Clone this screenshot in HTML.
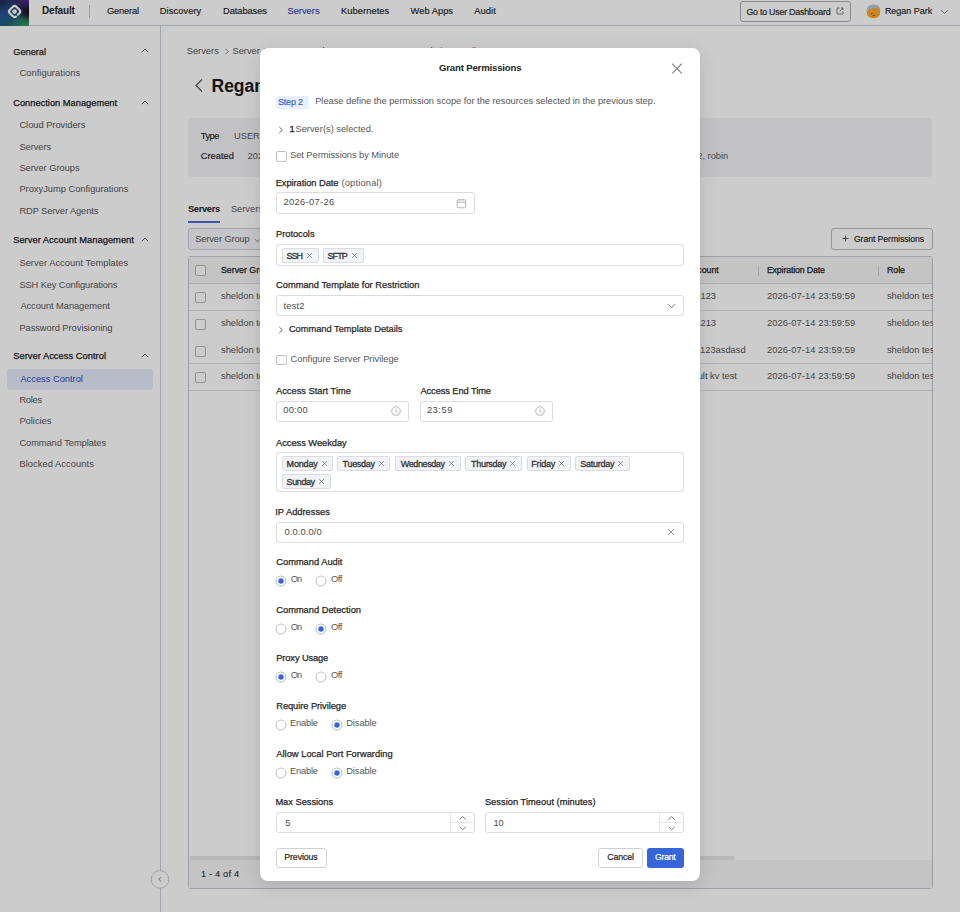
<!DOCTYPE html><html><head><meta charset="utf-8"><style>

html,body{margin:0;padding:0;width:960px;height:912px;overflow:hidden;background:#fff;font-family:"Liberation Sans",sans-serif;}
.layer{position:absolute;left:0;top:0;width:960px;height:912px;}
.t{position:absolute;white-space:pre;line-height:1;}
.b{position:absolute;box-sizing:border-box;}
svg.i{position:absolute;overflow:visible;}

</style></head><body>
<div class="layer"><div class="b" style="left:0px;top:0px;width:960px;height:912px;background:#fff;"></div><div class="b" style="left:0px;top:25px;width:960px;height:1px;background:#c9ced6;"></div><svg class="i" style="left:0;top:0" width="29" height="26" viewBox="0 0 29 26"><defs><linearGradient id="lg1" x1="0" y1="0.2" x2="1" y2="0.9"><stop offset="0" stop-color="#2356a8"/><stop offset="0.5" stop-color="#22607a"/><stop offset="1" stop-color="#33995a"/></linearGradient><radialGradient id="lg2" cx="1" cy="0" r="0.75"><stop offset="0" stop-color="#5a2aa8"/><stop offset="0.55" stop-color="#3a2060" stop-opacity="0.8"/><stop offset="1" stop-color="#3a2060" stop-opacity="0"/></radialGradient><radialGradient id="lg3" cx="1" cy="0.45" r="0.45"><stop offset="0" stop-color="#111318"/><stop offset="1" stop-color="#111318" stop-opacity="0"/></radialGradient><radialGradient id="lg4" cx="0" cy="0" r="0.6"><stop offset="0" stop-color="#1e2440"/><stop offset="1" stop-color="#1e2440" stop-opacity="0"/></radialGradient></defs><rect width="29" height="26" fill="url(#lg1)"/><rect width="29" height="26" fill="url(#lg4)"/><rect width="29" height="26" fill="url(#lg2)"/><rect width="29" height="26" fill="url(#lg3)"/><rect x="-4.6" y="-4.6" width="9.2" height="9.2" rx="2.4" transform="translate(14.6 11.5) rotate(45)" fill="none" stroke="#fff" stroke-width="2.1" stroke-dasharray="9.9 2.7 30 0" stroke-linecap="round"/><circle cx="14.6" cy="11.5" r="2.3" fill="#fff"/></svg><div class="b" style="left:89px;top:5px;width:1px;height:13px;background:#c8c8c8;"></div><div class="b" style="left:740px;top:1px;width:111px;height:21px;border:1px solid #a9acb2;border-radius:3px;"></div><svg class="i" style="left:836px;top:7px;" width="8" height="8" viewBox="0 0 8 8"><path d="M3.5 1H1V7H7V4.5 M5 1H7V3 M7 1L3.8 4.2" fill="none" stroke="#777" stroke-width="0.9"/></svg><svg class="i" style="left:866px;top:4px;" width="15" height="15" viewBox="0 0 15 15"><defs><clipPath id="av"><rect x="0.8" y="0.8" width="13.4" height="13.4" rx="5.6"/></clipPath></defs><g clip-path="url(#av)"><rect width="15" height="15" fill="#ffa82a"/><path d="M0 0H15V5.5Q11 3.2 7.5 4.2Q3 5.2 0 8Z" fill="#b8c8d8"/><circle cx="5.8" cy="9.6" r="0.7" fill="#6a4410"/><path d="M6.5 11.6 Q8 12.3 9.3 11.2" stroke="#6a4410" stroke-width="0.7" fill="none"/></g></svg><svg class="i" style="left:940px;top:9px;" width="9" height="6" viewBox="0 0 9 6"><path d="M1 1.2L4.4 4.6L7.8 1.2" fill="none" stroke="#666" stroke-width="0.9"/></svg><div class="b" style="left:160px;top:26px;width:1px;height:886px;background:#c9ced6;"></div><svg class="i" style="left:140.5px;top:48.0px;" width="8" height="5" viewBox="0 0 8 5"><path d="M0.8 4.2L4 1L7.2 4.2" fill="none" stroke="#555" stroke-width="0.9"/></svg><svg class="i" style="left:140.5px;top:99.5px;" width="8" height="5" viewBox="0 0 8 5"><path d="M0.8 4.2L4 1L7.2 4.2" fill="none" stroke="#555" stroke-width="0.9"/></svg><svg class="i" style="left:140.5px;top:236.5px;" width="8" height="5" viewBox="0 0 8 5"><path d="M0.8 4.2L4 1L7.2 4.2" fill="none" stroke="#555" stroke-width="0.9"/></svg><svg class="i" style="left:140.5px;top:352.5px;" width="8" height="5" viewBox="0 0 8 5"><path d="M0.8 4.2L4 1L7.2 4.2" fill="none" stroke="#555" stroke-width="0.9"/></svg><div class="b" style="left:7px;top:369px;width:146px;height:21px;background:#e5ecfa;border-radius:3px;"></div><svg class="i" style="left:150px;top:869px;" width="20" height="20" viewBox="0 0 20 20"><circle cx="10" cy="10.4" r="8.8" fill="#fff" stroke="#c9ced6" stroke-width="1"/><path d="M11 8.2L8.9 10.3L11 12.4" fill="none" stroke="#666" stroke-width="0.9"/></svg><svg class="i" style="left:223.5px;top:48px;" width="6" height="7" viewBox="0 0 6 7"><path d="M1.5 1L4.5 3.5L1.5 6" fill="none" stroke="#888" stroke-width="0.9"/></svg><svg class="i" style="left:194px;top:78px;" width="10" height="15" viewBox="0 0 10 15"><path d="M8 1.5L2 7.5L8 13.5" fill="none" stroke="#555" stroke-width="1.2"/></svg><div class="b" style="left:188px;top:118px;width:744px;height:59px;background:#f3f3f5;border-radius:4px;"></div><div class="b" style="left:188px;top:221px;width:32px;height:2px;background:#4a6cd4;"></div><div class="b" style="left:188px;top:228px;width:112px;height:22px;border:1px solid #c9ced6;border-radius:3px;background:#f7f7f9;"></div><svg class="i" style="left:254px;top:238px;" width="7" height="5" viewBox="0 0 7 5"><path d="M0.8 1L3.5 3.7L6.2 1" fill="none" stroke="#777" stroke-width="0.9"/></svg><div class="b" style="left:831px;top:228px;width:102px;height:22px;border:1px solid #b9bdc4;border-radius:3px;"></div><svg class="i" style="left:842px;top:235px;" width="7" height="7" viewBox="0 0 7 7"><path d="M3.5 0.5V6.5M0.5 3.5H6.5" stroke="#444" stroke-width="0.9"/></svg><div class="b" style="left:188px;top:256px;width:745px;height:633px;border:1px solid #c5c9d0;border-radius:3px;background:#fff;"></div><div class="b" style="left:189px;top:257px;width:743px;height:27px;background:#f5f5f7;border-bottom:1px solid #d4d8de;"></div><div class="b" style="left:189px;top:310px;width:743px;height:1px;background:#dcdfe4;"></div><div class="b" style="left:189px;top:363px;width:743px;height:1px;background:#dcdfe4;"></div><div class="b" style="left:189px;top:390px;width:743px;height:1px;background:#dcdfe4;"></div><div class="b" style="left:189px;top:860px;width:743px;height:28px;background:#f5f5f7;"></div><div class="b" style="left:190px;top:856px;width:545px;height:4px;background:#e6e6e6;border-radius:2px;"></div><div class="b" style="left:195px;top:265px;width:11px;height:11px;border:1px solid #b3b8c0;border-radius:2px;background:#fff;"></div><div class="b" style="left:195px;top:292px;width:11px;height:11px;border:1px solid #b3b8c0;border-radius:2px;background:#fff;"></div><div class="b" style="left:195px;top:319px;width:11px;height:11px;border:1px solid #b3b8c0;border-radius:2px;background:#fff;"></div><div class="b" style="left:195px;top:346px;width:11px;height:11px;border:1px solid #b3b8c0;border-radius:2px;background:#fff;"></div><div class="b" style="left:195px;top:372px;width:11px;height:11px;border:1px solid #b3b8c0;border-radius:2px;background:#fff;"></div><div class="b" style="left:758px;top:266px;width:1px;height:10px;background:#d0d3d8;"></div><div class="b" style="left:878px;top:266px;width:1px;height:10px;background:#d0d3d8;"></div><span class="t" style="left:42.00px;top:6.43px;font-size:10px;font-weight:700;letter-spacing:-0.167px;color:#1f1f1f;">Default</span><span class="t" style="left:107.00px;top:7.23px;font-size:9.3px;-webkit-text-stroke:0.15px currentColor;letter-spacing:-0.167px;color:#222;">General</span><span class="t" style="left:159.80px;top:7.23px;font-size:9.3px;-webkit-text-stroke:0.15px currentColor;letter-spacing:0.075px;color:#222;">Discovery</span><span class="t" style="left:223.10px;top:7.23px;font-size:9.3px;-webkit-text-stroke:0.15px currentColor;letter-spacing:-0.075px;color:#222;">Databases</span><span class="t" style="left:287.50px;top:7.23px;font-size:9.3px;-webkit-text-stroke:0.15px currentColor;color:#3048c0;">Servers</span><span class="t" style="left:340.90px;top:7.23px;font-size:9.3px;-webkit-text-stroke:0.15px currentColor;letter-spacing:0.089px;color:#222;">Kubernetes</span><span class="t" style="left:410.60px;top:7.23px;font-size:9.3px;-webkit-text-stroke:0.15px currentColor;letter-spacing:0.029px;color:#222;">Web Apps</span><span class="t" style="left:474.20px;top:7.23px;font-size:9.3px;-webkit-text-stroke:0.15px currentColor;letter-spacing:0.100px;color:#222;">Audit</span><span class="t" style="left:746.40px;top:7.96px;font-size:8.9px;-webkit-text-stroke:0.15px currentColor;letter-spacing:-0.242px;color:#222;">Go to User Dashboard</span><span class="t" style="left:884.90px;top:7.48px;font-size:9.0px;-webkit-text-stroke:0.15px currentColor;letter-spacing:-0.022px;color:#222;">Regan Park</span><span class="t" style="left:13.20px;top:47.53px;font-size:9.3px;-webkit-text-stroke:0.25px currentColor;letter-spacing:-0.033px;color:#1d1d1f;">General</span><span class="t" style="left:13.20px;top:99.03px;font-size:9.3px;-webkit-text-stroke:0.25px currentColor;color:#1d1d1f;">Connection Management</span><span class="t" style="left:13.20px;top:236.03px;font-size:9.3px;-webkit-text-stroke:0.25px currentColor;letter-spacing:0.033px;color:#1d1d1f;">Server Account Management</span><span class="t" style="left:13.20px;top:352.03px;font-size:9.3px;-webkit-text-stroke:0.25px currentColor;letter-spacing:0.040px;color:#1d1d1f;">Server Access Control</span><span class="t" style="left:19.40px;top:69.03px;font-size:9.3px;letter-spacing:0.062px;color:#555;">Configurations</span><span class="t" style="left:19.40px;top:121.03px;font-size:9.3px;letter-spacing:-0.014px;color:#555;">Cloud Providers</span><span class="t" style="left:19.40px;top:143.03px;font-size:9.3px;letter-spacing:-0.033px;color:#555;">Servers</span><span class="t" style="left:19.40px;top:164.03px;font-size:9.3px;letter-spacing:-0.017px;color:#555;">Server Groups</span><span class="t" style="left:19.40px;top:185.03px;font-size:9.3px;color:#555;">ProxyJump Configurations</span><span class="t" style="left:19.40px;top:207.03px;font-size:9.3px;letter-spacing:-0.088px;color:#555;">RDP Server Agents</span><span class="t" style="left:19.40px;top:259.03px;font-size:9.3px;letter-spacing:0.043px;color:#555;">Server Account Templates</span><span class="t" style="left:19.40px;top:280.53px;font-size:9.3px;letter-spacing:-0.105px;color:#555;">SSH Key Configurations</span><span class="t" style="left:20.40px;top:301.63px;font-size:9.3px;letter-spacing:-0.059px;color:#555;">Account Management</span><span class="t" style="left:19.40px;top:323.53px;font-size:9.3px;letter-spacing:-0.050px;color:#555;">Password Provisioning</span><span class="t" style="left:20.40px;top:375.03px;font-size:9.3px;color:#3048c0;">Access Control</span><span class="t" style="left:19.40px;top:396.03px;font-size:9.3px;letter-spacing:-0.250px;color:#555;">Roles</span><span class="t" style="left:19.40px;top:417.03px;font-size:9.3px;color:#555;">Policies</span><span class="t" style="left:19.40px;top:439.03px;font-size:9.3px;letter-spacing:-0.062px;color:#555;">Command Templates</span><span class="t" style="left:19.40px;top:460.03px;font-size:9.3px;letter-spacing:0.067px;color:#555;">Blocked Accounts</span><span class="t" style="left:186.75px;top:47.03px;font-size:9.3px;letter-spacing:-0.000px;color:#555;">Servers</span><span class="t" style="left:232.50px;top:47.03px;font-size:9.3px;color:#555;">Server Access Control</span><span class="t" style="left:370.00px;top:47.03px;font-size:9.3px;color:#555;">Access Control List Details</span><span class="t" style="left:211.50px;top:77.98px;font-size:17.5px;font-weight:700;color:#1a1a1a;">Regan Park</span><span class="t" style="left:200.80px;top:132.33px;font-size:9.3px;-webkit-text-stroke:0.15px currentColor;letter-spacing:-0.533px;color:#222;">Type</span><span class="t" style="left:234.00px;top:132.33px;font-size:9.3px;color:#555;">USER</span><span class="t" style="left:200.80px;top:152.03px;font-size:9.3px;-webkit-text-stroke:0.15px currentColor;color:#222;">Created</span><span class="t" style="left:247.60px;top:152.03px;font-size:9.3px;color:#555;">2025-07-14 10:23:45</span><span class="t" style="left:664.70px;top:152.03px;font-size:9.3px;color:#555;">sheldon2, robin</span><span class="t" style="left:188.00px;top:205.03px;font-size:9.3px;font-weight:700;letter-spacing:-0.333px;color:#222;">Servers</span><span class="t" style="left:230.90px;top:205.03px;font-size:9.3px;color:#555;">Servers Accounts</span><span class="t" style="left:195.20px;top:234.63px;font-size:9.3px;letter-spacing:-0.109px;color:#555;">Server Group</span><span class="t" style="left:853.90px;top:235.03px;font-size:8.7px;-webkit-text-stroke:0.15px currentColor;letter-spacing:-0.075px;color:#222;">Grant Permissions</span><span class="t" style="left:221.00px;top:266.45px;font-size:8.8px;-webkit-text-stroke:0.25px currentColor;color:#222;">Server Group</span><span class="t" style="left:687.00px;top:266.45px;font-size:8.8px;-webkit-text-stroke:0.25px currentColor;color:#222;">Account</span><span class="t" style="left:766.90px;top:266.25px;font-size:8.8px;-webkit-text-stroke:0.25px currentColor;letter-spacing:-0.157px;color:#222;">Expiration Date</span><span class="t" style="left:886.90px;top:266.25px;font-size:8.8px;-webkit-text-stroke:0.25px currentColor;color:#222;">Role</span><span class="t" style="left:221.00px;top:292.03px;font-size:9.3px;color:#555;">sheldon test</span><span class="t" style="left:663.30px;top:292.03px;font-size:9.3px;color:#555;">sheldons123</span><span class="t" style="left:886.90px;top:292.03px;font-size:9.3px;color:#555;">sheldon test</span><span class="t" style="left:766.90px;top:292.03px;font-size:9.3px;letter-spacing:0.111px;color:#555;">2026-07-14 23:59:59</span><span class="t" style="left:221.00px;top:319.03px;font-size:9.3px;color:#555;">sheldon test</span><span class="t" style="left:663.30px;top:319.03px;font-size:9.3px;color:#555;">sheldons213</span><span class="t" style="left:886.90px;top:319.03px;font-size:9.3px;color:#555;">sheldon test</span><span class="t" style="left:766.90px;top:319.03px;font-size:9.3px;letter-spacing:0.111px;color:#555;">2026-07-14 23:59:59</span><span class="t" style="left:221.00px;top:346.03px;font-size:9.3px;color:#555;">sheldon test</span><span class="t" style="left:662.90px;top:346.03px;font-size:9.3px;color:#555;">sheldons123asdasd</span><span class="t" style="left:886.90px;top:346.03px;font-size:9.3px;color:#555;">sheldon test</span><span class="t" style="left:766.90px;top:346.03px;font-size:9.3px;letter-spacing:0.111px;color:#555;">2026-07-14 23:59:59</span><span class="t" style="left:221.00px;top:372.03px;font-size:9.3px;color:#555;">sheldon test</span><span class="t" style="left:679.60px;top:372.03px;font-size:9.3px;color:#555;">default kv test</span><span class="t" style="left:886.90px;top:372.03px;font-size:9.3px;color:#555;">sheldon test</span><span class="t" style="left:766.90px;top:372.03px;font-size:9.3px;letter-spacing:0.111px;color:#555;">2026-07-14 23:59:59</span><span class="t" style="left:201.00px;top:869.93px;font-size:9.3px;-webkit-text-stroke:0.12px currentColor;letter-spacing:0.156px;color:#333;">1 - 4 of 4</span></div>
<div class="layer"><div class="b" style="left:933px;top:257px;width:27px;height:632px;background:#fff;"></div></div>
<div class="layer"><div class="b" style="left:0;top:0;width:960px;height:912px;background:rgba(0,0,0,0.2);"></div></div>
<div class="layer"><div class="b" style="left:260px;top:48px;width:440px;height:833px;background:#fff;border-radius:8px;box-shadow:0 4px 18px rgba(0,0,0,0.12);"></div><svg class="i" style="left:670px;top:62px;" width="14" height="14" viewBox="0 0 14 14"><path d="M2.2 1.7L11.8 11.5M11.8 1.7L2.2 11.5" stroke="#6f7378" stroke-width="1.05"/></svg><div class="b" style="left:276px;top:96px;width:33px;height:13px;background:#e8f0fd;border-radius:2px;"></div><svg class="i" style="left:278px;top:126px;" width="6" height="8" viewBox="0 0 6 8"><path d="M1.3 1L4.4 3.9L1.3 6.8" fill="none" stroke="#555" stroke-width="0.9"/></svg><div class="b" style="left:276px;top:151px;width:11px;height:11px;border:1px solid #b9bdc5;border-radius:2px;"></div><div class="b" style="left:276px;top:192px;width:199px;height:22px;border:1px solid #d9dce1;border-radius:3px;"></div><svg class="i" style="left:456px;top:198px;" width="11" height="11" viewBox="0 0 11 11"><rect x="1.2" y="1.8" width="8.4" height="8" rx="1" fill="none" stroke="#aaa" stroke-width="0.9"/><path d="M1.2 4.2H9.6M3.5 0.8V2.5M7.3 0.8V2.5" stroke="#aaa" stroke-width="0.9"/></svg><div class="b" style="left:276px;top:244px;width:408px;height:22px;border:1px solid #d9dce1;border-radius:3px;"></div><div class="b" style="left:282px;top:248px;width:37px;height:15px;background:#f2f3f6;border:1px solid #d9dce2;border-radius:2px;"></div><svg class="i" style="left:305.5px;top:251.5px;" width="7" height="7" viewBox="0 0 7 7"><path d="M1 1L6 6M6 1L1 6" stroke="#8a8a8a" stroke-width="0.85"/></svg><div class="b" style="left:323px;top:248px;width:41px;height:15px;background:#f2f3f6;border:1px solid #d9dce2;border-radius:2px;"></div><svg class="i" style="left:350.5px;top:251.5px;" width="7" height="7" viewBox="0 0 7 7"><path d="M1 1L6 6M6 1L1 6" stroke="#8a8a8a" stroke-width="0.85"/></svg><div class="b" style="left:276px;top:295px;width:408px;height:21px;border:1px solid #d9dce1;border-radius:3px;"></div><svg class="i" style="left:667px;top:303px;" width="9" height="6" viewBox="0 0 9 6"><path d="M1 1.2L4.5 4.7L8 1.2" fill="none" stroke="#666" stroke-width="0.9"/></svg><svg class="i" style="left:278px;top:326px;" width="6" height="8" viewBox="0 0 6 8"><path d="M1.3 1L4.4 3.9L1.3 6.8" fill="none" stroke="#555" stroke-width="0.9"/></svg><div class="b" style="left:276px;top:355px;width:11px;height:10px;border:1px solid #b9bdc5;border-radius:2px;"></div><div class="b" style="left:276px;top:401px;width:133px;height:21px;border:1px solid #d9dce1;border-radius:3px;"></div><div class="b" style="left:420px;top:401px;width:133px;height:21px;border:1px solid #d9dce1;border-radius:3px;"></div><svg class="i" style="left:391.2px;top:406.3px;" width="10" height="10" viewBox="0 0 10 10"><circle cx="5" cy="5" r="4.3" fill="none" stroke="#b0b0b0" stroke-width="0.9"/><path d="M5 2.6V5.2L6.6 6.6" fill="none" stroke="#b0b0b0" stroke-width="0.9"/></svg><svg class="i" style="left:535px;top:406.3px;" width="10" height="10" viewBox="0 0 10 10"><circle cx="5" cy="5" r="4.3" fill="none" stroke="#b0b0b0" stroke-width="0.9"/><path d="M5 2.6V5.2L6.6 6.6" fill="none" stroke="#b0b0b0" stroke-width="0.9"/></svg><div class="b" style="left:276px;top:452px;width:408px;height:40px;border:1px solid #d9dce1;border-radius:3px;"></div><div class="b" style="left:282px;top:456px;width:51px;height:15px;background:#f2f3f6;border:1px solid #d9dce2;border-radius:2px;"></div><svg class="i" style="left:320.5px;top:459.75px;" width="7" height="7" viewBox="0 0 7 7"><path d="M1 1L6 6M6 1L1 6" stroke="#8a8a8a" stroke-width="0.85"/></svg><div class="b" style="left:337px;top:456px;width:53px;height:15px;background:#f2f3f6;border:1px solid #d9dce2;border-radius:2px;"></div><svg class="i" style="left:378.2px;top:459.75px;" width="7" height="7" viewBox="0 0 7 7"><path d="M1 1L6 6M6 1L1 6" stroke="#8a8a8a" stroke-width="0.85"/></svg><div class="b" style="left:395px;top:456px;width:66px;height:15px;background:#f2f3f6;border:1px solid #d9dce2;border-radius:2px;"></div><svg class="i" style="left:448.4px;top:459.75px;" width="7" height="7" viewBox="0 0 7 7"><path d="M1 1L6 6M6 1L1 6" stroke="#8a8a8a" stroke-width="0.85"/></svg><div class="b" style="left:465px;top:456px;width:57px;height:15px;background:#f2f3f6;border:1px solid #d9dce2;border-radius:2px;"></div><svg class="i" style="left:509.3px;top:459.75px;" width="7" height="7" viewBox="0 0 7 7"><path d="M1 1L6 6M6 1L1 6" stroke="#8a8a8a" stroke-width="0.85"/></svg><div class="b" style="left:527px;top:456px;width:44px;height:15px;background:#f2f3f6;border:1px solid #d9dce2;border-radius:2px;"></div><svg class="i" style="left:558.0px;top:459.75px;" width="7" height="7" viewBox="0 0 7 7"><path d="M1 1L6 6M6 1L1 6" stroke="#8a8a8a" stroke-width="0.85"/></svg><div class="b" style="left:575px;top:456px;width:55px;height:15px;background:#f2f3f6;border:1px solid #d9dce2;border-radius:2px;"></div><svg class="i" style="left:617.4px;top:459.75px;" width="7" height="7" viewBox="0 0 7 7"><path d="M1 1L6 6M6 1L1 6" stroke="#8a8a8a" stroke-width="0.85"/></svg><div class="b" style="left:282px;top:474px;width:49px;height:15px;background:#f2f3f6;border:1px solid #d9dce2;border-radius:2px;"></div><svg class="i" style="left:318.1px;top:477.75px;" width="7" height="7" viewBox="0 0 7 7"><path d="M1 1L6 6M6 1L1 6" stroke="#8a8a8a" stroke-width="0.85"/></svg><div class="b" style="left:276px;top:522px;width:408px;height:21px;border:1px solid #d9dce1;border-radius:3px;"></div><svg class="i" style="left:667px;top:528px;" width="8" height="8" viewBox="0 0 8 8"><path d="M1 1L7 7M7 1L1 7" stroke="#888" stroke-width="0.9"/></svg><svg class="i" style="left:275.35px;top:574.6999999999999px;" width="12" height="12" viewBox="0 0 12 12"><circle cx="6" cy="6" r="5" fill="#fff" stroke="#aeb4c0" stroke-width="0.9"/><circle cx="6" cy="6" r="2.7" fill="#3565d8"/></svg><svg class="i" style="left:315.20000000000005px;top:574.6999999999999px;" width="12" height="12" viewBox="0 0 12 12"><circle cx="6" cy="6" r="5" fill="#fff" stroke="#b5b9c1" stroke-width="0.9"/></svg><svg class="i" style="left:275.35px;top:622.6999999999999px;" width="12" height="12" viewBox="0 0 12 12"><circle cx="6" cy="6" r="5" fill="#fff" stroke="#b5b9c1" stroke-width="0.9"/></svg><svg class="i" style="left:315.20000000000005px;top:622.6999999999999px;" width="12" height="12" viewBox="0 0 12 12"><circle cx="6" cy="6" r="5" fill="#fff" stroke="#aeb4c0" stroke-width="0.9"/><circle cx="6" cy="6" r="2.7" fill="#3565d8"/></svg><svg class="i" style="left:275.35px;top:670.6999999999999px;" width="12" height="12" viewBox="0 0 12 12"><circle cx="6" cy="6" r="5" fill="#fff" stroke="#aeb4c0" stroke-width="0.9"/><circle cx="6" cy="6" r="2.7" fill="#3565d8"/></svg><svg class="i" style="left:315.20000000000005px;top:670.6999999999999px;" width="12" height="12" viewBox="0 0 12 12"><circle cx="6" cy="6" r="5" fill="#fff" stroke="#b5b9c1" stroke-width="0.9"/></svg><svg class="i" style="left:275.35px;top:718.6999999999999px;" width="12" height="12" viewBox="0 0 12 12"><circle cx="6" cy="6" r="5" fill="#fff" stroke="#b5b9c1" stroke-width="0.9"/></svg><svg class="i" style="left:331.1px;top:718.6999999999999px;" width="12" height="12" viewBox="0 0 12 12"><circle cx="6" cy="6" r="5" fill="#fff" stroke="#aeb4c0" stroke-width="0.9"/><circle cx="6" cy="6" r="2.7" fill="#3565d8"/></svg><svg class="i" style="left:275.35px;top:767.0px;" width="12" height="12" viewBox="0 0 12 12"><circle cx="6" cy="6" r="5" fill="#fff" stroke="#b5b9c1" stroke-width="0.9"/></svg><svg class="i" style="left:331.1px;top:767.0px;" width="12" height="12" viewBox="0 0 12 12"><circle cx="6" cy="6" r="5" fill="#fff" stroke="#aeb4c0" stroke-width="0.9"/><circle cx="6" cy="6" r="2.7" fill="#3565d8"/></svg><div class="b" style="left:276px;top:812px;width:199px;height:21px;border:1px solid #d9dce1;border-radius:3px;"></div><div class="b" style="left:450px;top:813px;width:1px;height:19px;background:#e3e5e8;"></div><div class="b" style="left:450px;top:822px;width:24px;height:1px;background:#e3e5e8;"></div><svg class="i" style="left:459.2px;top:815.7px;" width="8" height="5" viewBox="0 0 8 5"><path d="M0.6 3.6L3.7 0.6L6.8 3.6" fill="none" stroke="#666" stroke-width="0.9"/></svg><svg class="i" style="left:459.2px;top:826px;" width="8" height="5" viewBox="0 0 8 5"><path d="M0.6 0.8L3.7 3.8L6.8 0.8" fill="none" stroke="#666" stroke-width="0.9"/></svg><div class="b" style="left:485px;top:812px;width:199px;height:21px;border:1px solid #d9dce1;border-radius:3px;"></div><div class="b" style="left:659px;top:813px;width:1px;height:19px;background:#e3e5e8;"></div><div class="b" style="left:659px;top:822px;width:24px;height:1px;background:#e3e5e8;"></div><svg class="i" style="left:668.2px;top:815.7px;" width="8" height="5" viewBox="0 0 8 5"><path d="M0.6 3.6L3.7 0.6L6.8 3.6" fill="none" stroke="#666" stroke-width="0.9"/></svg><svg class="i" style="left:668.2px;top:826px;" width="8" height="5" viewBox="0 0 8 5"><path d="M0.6 0.8L3.7 3.8L6.8 0.8" fill="none" stroke="#666" stroke-width="0.9"/></svg><div class="b" style="left:276px;top:848px;width:51px;height:20px;border:1px solid #cdd0d5;border-radius:3px;"></div><div class="b" style="left:598px;top:848px;width:45px;height:20px;border:1px solid #cdd0d5;border-radius:3px;"></div><div class="b" style="left:647px;top:848px;width:37px;height:20px;background:#3565d8;border-radius:3px;"></div><span class="t" style="left:439.00px;top:63.17px;font-size:9.6px;font-weight:700;letter-spacing:-0.175px;color:#262626;">Grant Permissions</span><span class="t" style="left:278.00px;top:98.18px;font-size:9px;-webkit-text-stroke:0.15px currentColor;letter-spacing:-0.200px;color:#2f5fd8;">Step 2</span><span class="t" style="left:315.20px;top:97.13px;font-size:9.3px;letter-spacing:-0.022px;color:#555;">Please define the permission scope for the resources selected in the previous step.</span><span class="t" style="left:289.50px;top:125.23px;font-size:9.3px;-webkit-text-stroke:0.30px currentColor;color:#222;">1</span><span class="t" style="left:295.50px;top:125.23px;font-size:9.3px;color:#555;">Server(s) selected.</span><span class="t" style="left:290.00px;top:150.83px;font-size:9.3px;letter-spacing:-0.042px;color:#555;">Set Permissions by Minute</span><span class="t" style="left:275.70px;top:178.63px;font-size:9.3px;-webkit-text-stroke:0.25px currentColor;letter-spacing:-0.057px;color:#262626;">Expiration Date</span><span class="t" style="left:341.40px;top:178.63px;font-size:9.3px;letter-spacing:0.200px;color:#555;">(optional)</span><span class="t" style="left:283.40px;top:198.33px;font-size:9.3px;letter-spacing:0.356px;color:#4a4a4a;">2026-07-26</span><span class="t" style="left:276.00px;top:230.23px;font-size:9.3px;-webkit-text-stroke:0.25px currentColor;letter-spacing:-0.025px;color:#262626;">Protocols</span><span class="t" style="left:286.60px;top:251.78px;font-size:9px;-webkit-text-stroke:0.30px currentColor;letter-spacing:-1.000px;color:#333;">SSH</span><span class="t" style="left:327.50px;top:251.78px;font-size:9px;-webkit-text-stroke:0.30px currentColor;letter-spacing:-0.933px;color:#333;">SFTP</span><span class="t" style="left:276.00px;top:281.23px;font-size:9.3px;-webkit-text-stroke:0.25px currentColor;letter-spacing:0.013px;color:#262626;">Command Template for Restriction</span><span class="t" style="left:283.60px;top:302.03px;font-size:9.3px;letter-spacing:0.150px;color:#4a4a4a;">test2</span><span class="t" style="left:288.90px;top:325.03px;font-size:9.3px;-webkit-text-stroke:0.22px currentColor;letter-spacing:-0.017px;color:#1f1f1f;">Command Template Details</span><span class="t" style="left:290.60px;top:355.23px;font-size:9.3px;letter-spacing:-0.016px;color:#555;">Configure Server Privilege</span><span class="t" style="left:276.00px;top:386.63px;font-size:9.3px;-webkit-text-stroke:0.25px currentColor;color:#262626;">Access Start Time</span><span class="t" style="left:420.40px;top:386.63px;font-size:9.3px;-webkit-text-stroke:0.25px currentColor;letter-spacing:-0.086px;color:#262626;">Access End Time</span><span class="t" style="left:283.20px;top:406.23px;font-size:9.3px;letter-spacing:0.300px;color:#4a4a4a;">00:00</span><span class="t" style="left:426.90px;top:406.23px;font-size:9.3px;letter-spacing:0.550px;color:#4a4a4a;">23:59</span><span class="t" style="left:276.00px;top:438.63px;font-size:9.3px;-webkit-text-stroke:0.25px currentColor;letter-spacing:-0.031px;color:#262626;">Access Weekday</span><span class="t" style="left:286.60px;top:459.78px;font-size:9px;-webkit-text-stroke:0.30px currentColor;letter-spacing:-0.160px;color:#333;">Monday</span><span class="t" style="left:342.60px;top:459.78px;font-size:9px;-webkit-text-stroke:0.30px currentColor;letter-spacing:-0.300px;color:#333;">Tuesday</span><span class="t" style="left:400.80px;top:459.78px;font-size:9px;-webkit-text-stroke:0.30px currentColor;letter-spacing:-0.400px;color:#333;">Wednesday</span><span class="t" style="left:470.90px;top:459.78px;font-size:9px;-webkit-text-stroke:0.30px currentColor;letter-spacing:-0.257px;color:#333;">Thursday</span><span class="t" style="left:531.30px;top:459.78px;font-size:9px;-webkit-text-stroke:0.30px currentColor;letter-spacing:-0.200px;color:#333;">Friday</span><span class="t" style="left:580.20px;top:459.78px;font-size:9px;-webkit-text-stroke:0.30px currentColor;letter-spacing:-0.229px;color:#333;">Saturday</span><span class="t" style="left:286.60px;top:477.78px;font-size:9px;-webkit-text-stroke:0.30px currentColor;letter-spacing:-0.400px;color:#333;">Sunday</span><span class="t" style="left:275.25px;top:508.23px;font-size:9.3px;-webkit-text-stroke:0.25px currentColor;color:#262626;">IP Addresses</span><span class="t" style="left:284.40px;top:528.23px;font-size:9.3px;letter-spacing:0.125px;color:#4a4a4a;">0.0.0.0/0</span><span class="t" style="left:276.25px;top:558.23px;font-size:9.3px;-webkit-text-stroke:0.25px currentColor;color:#262626;">Command Audit</span><span class="t" style="left:290.70px;top:575.13px;font-size:9.3px;letter-spacing:-1.000px;color:#555;">On</span><span class="t" style="left:331.00px;top:575.13px;font-size:9.3px;letter-spacing:-0.400px;color:#555;">Off</span><span class="t" style="left:276.25px;top:605.83px;font-size:9.3px;-webkit-text-stroke:0.25px currentColor;color:#262626;">Command Detection</span><span class="t" style="left:290.70px;top:623.13px;font-size:9.3px;letter-spacing:-1.000px;color:#555;">On</span><span class="t" style="left:331.00px;top:623.13px;font-size:9.3px;letter-spacing:-0.400px;color:#555;">Off</span><span class="t" style="left:276.25px;top:654.03px;font-size:9.3px;-webkit-text-stroke:0.25px currentColor;letter-spacing:-0.120px;color:#262626;">Proxy Usage</span><span class="t" style="left:290.70px;top:671.13px;font-size:9.3px;letter-spacing:-1.000px;color:#555;">On</span><span class="t" style="left:331.00px;top:671.13px;font-size:9.3px;letter-spacing:-0.400px;color:#555;">Off</span><span class="t" style="left:276.25px;top:702.03px;font-size:9.3px;-webkit-text-stroke:0.25px currentColor;letter-spacing:-0.062px;color:#262626;">Require Privilege</span><span class="t" style="left:290.00px;top:719.13px;font-size:9.3px;letter-spacing:-0.200px;color:#555;">Enable</span><span class="t" style="left:346.20px;top:719.13px;font-size:9.3px;letter-spacing:-0.067px;color:#555;">Disable</span><span class="t" style="left:276.25px;top:750.23px;font-size:9.3px;-webkit-text-stroke:0.25px currentColor;letter-spacing:0.023px;color:#262626;">Allow Local Port Forwarding</span><span class="t" style="left:290.00px;top:767.43px;font-size:9.3px;letter-spacing:-0.200px;color:#555;">Enable</span><span class="t" style="left:346.20px;top:767.43px;font-size:9.3px;letter-spacing:-0.067px;color:#555;">Disable</span><span class="t" style="left:275.40px;top:797.93px;font-size:9.3px;-webkit-text-stroke:0.25px currentColor;letter-spacing:-0.018px;color:#262626;">Max Sessions</span><span class="t" style="left:484.90px;top:797.93px;font-size:9.3px;-webkit-text-stroke:0.25px currentColor;letter-spacing:0.025px;color:#262626;">Session Timeout (minutes)</span><span class="t" style="left:285.20px;top:819.03px;font-size:9.3px;color:#4a4a4a;">5</span><span class="t" style="left:493.40px;top:819.03px;font-size:9.3px;color:#4a4a4a;">10</span><span class="t" style="left:284.30px;top:853.35px;font-size:8.8px;-webkit-text-stroke:0.20px currentColor;letter-spacing:-0.114px;color:#222;">Previous</span><span class="t" style="left:607.20px;top:853.35px;font-size:8.8px;-webkit-text-stroke:0.20px currentColor;letter-spacing:-0.120px;color:#222;">Cancel</span><span class="t" style="left:655.10px;top:853.35px;font-size:8.8px;-webkit-text-stroke:0.20px currentColor;letter-spacing:-0.350px;color:#fff;">Grant</span></div>
</body></html>
